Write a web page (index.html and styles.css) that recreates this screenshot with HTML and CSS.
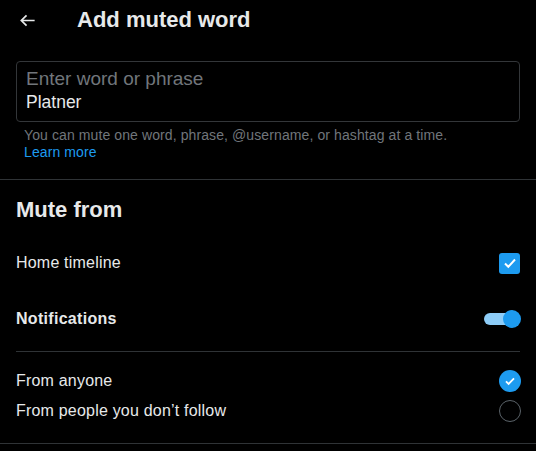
FILE: index.html
```html
<!DOCTYPE html>
<html lang="en">

<head>
    <meta charset="UTF-8">
    <meta name="viewport" content="width=device-width, initial-scale=1.0">
    <title>Add muted word</title>
    <link rel="stylesheet" href="styles.css">
</head>

<body>
    <div class="page">
        <div class="header">
            <svg class="back" viewBox="0 0 20 20">
                <path d="M17.5 10H3.5M9 4.5L3.5 10L9 15.5" />
            </svg>
            <span class="title">Add muted word</span>
        </div>

        <div class="field-wrap">
            <div class="field">
                <div class="placeholder">Enter word or phrase</div>
                <div class="value">Platner</div>
            </div>
            <div class="help">
                You can mute one word, phrase, @username, or hashtag at a time.<br>
                <a class="link" href="#">Learn more</a>
            </div>
        </div>

        <div class="divider"></div>

        <div class="section">
            <div class="section-title">Mute from</div>

            <div class="row">
                <span class="label">Home timeline</span>
                <span class="checkbox">
                    <svg viewBox="0 0 20 20"><path d="M5 10.5l3.3 3.3L15 6.5" /></svg>
                </span>
            </div>

            <div class="row">
                <span class="label bold">Notifications</span>
                <span class="toggle"><span class="knob"></span></span>
            </div>

            <div class="divider inset"></div>

            <div class="options">
                <div class="option">
                    <span class="label">From anyone</span>
                    <span class="radio on">
                        <svg viewBox="0 0 22 22"><path d="M7 11.3l2.6 2.6L15 8.3" /></svg>
                    </span>
                </div>
                <div class="option">
                    <span class="label">From people you don’t follow</span>
                    <span class="radio"></span>
                </div>
            </div>
        </div>

        <div class="divider"></div>
    </div>
</body>

</html>
```

FILE: styles.css
```css
body {
    margin: 0;
    background: #000;
    color: #e7e9ea;
    font-family: "Liberation Sans", Arial, sans-serif;
}

.page {
    width: 536px;
}

.header {
    display: flex;
    align-items: center;
    height: 40px;
    padding-left: 18px;
}

.back {
    width: 19px;
    height: 19px;
    fill: none;
    stroke: #e7e9ea;
    stroke-width: 1.8;
}

.title {
    margin-left: 40px;
    font-size: 22px;
    font-weight: bold;
    line-height: 28px;
}

.field-wrap {
    padding: 21px 16px 0;
}

.field {
    border: 1px solid #333639;
    border-radius: 4px;
    padding: 6px 9px 9px;
}

.placeholder {
    color: #71767b;
    font-size: 19px;
    line-height: 22px;
}

.value {
    font-size: 17.5px;
    line-height: 22px;
    padding-top: 1px;
    margin-bottom: -1px;
}

.help {
    margin-top: 5px;
    padding-left: 8px;
    color: #71767b;
    font-size: 14px;
    line-height: 17px;
    letter-spacing: 0.1px;
}

.link {
    color: #1d9bf0;
    text-decoration: none;
}

.divider {
    height: 1px;
    background: #2f3336;
    margin-top: 18px;
}

.divider.inset {
    margin-top: 5px;
}

.section {
    padding: 16px 16px 0;
}

.section-title {
    font-size: 22px;
    font-weight: bold;
    line-height: 28px;
    margin-bottom: 11px;
}

.row {
    display: flex;
    align-items: center;
    justify-content: space-between;
    height: 56px;
}

.row:nth-of-type(3) {
    margin-bottom: -1px;
}

.label {
    font-size: 16px;
    letter-spacing: 0.2px;
}

.bold {
    font-weight: bold;
    letter-spacing: 0.3px;
}

.checkbox {
    display: flex;
    width: 21px;
    height: 21px;
    border-radius: 3px;
    background: #1d9bf0;
    align-items: center;
    justify-content: center;
}

.checkbox svg {
    width: 20px;
    height: 20px;
    fill: none;
    stroke: #fff;
    stroke-width: 2;
}

.toggle {
    position: relative;
    width: 37px;
    height: 18px;
    margin-right: -1px;
}

.toggle::before {
    content: "";
    position: absolute;
    left: 0;
    top: 3px;
    width: 34px;
    height: 12px;
    border-radius: 6px;
    background: #8ecdf8;
}

.knob {
    position: absolute;
    right: 0;
    top: 0;
    width: 18px;
    height: 18px;
    border-radius: 50%;
    background: #1d9bf0;
}

.options {
    padding-top: 14px;
}

.option {
    display: flex;
    align-items: center;
    justify-content: space-between;
    height: 30px;
}

.radio {
    box-sizing: border-box;
    width: 22px;
    height: 22px;
    margin-right: -1px;
    border-radius: 50%;
    border: 1.5px solid #5b6369;
}

.radio.on {
    border: none;
    background: #1d9bf0;
}

.radio svg {
    width: 22px;
    height: 22px;
    display: block;
    fill: none;
    stroke: #fff;
    stroke-width: 1.8;
}

.section + .divider {
    margin-top: 17px;
}
```
